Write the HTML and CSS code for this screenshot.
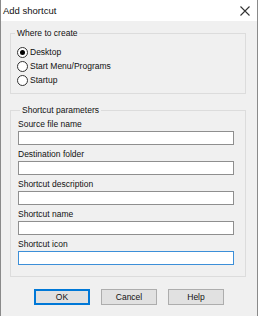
FILE: index.html
```html
<!DOCTYPE html>
<html lang="en">
<head>
    <meta charset="UTF-8">
    <title>Add shortcut</title>
    <link rel="stylesheet" href="styles.css">
</head>
<body>
    <div class="window">
        <div class="titlebar">
            <span class="title">Add shortcut</span>
            <svg class="close" width="10" height="10" viewBox="0 0 10 10">
                <path d="M0.5 0.5 L9.5 9.5 M9.5 0.5 L0.5 9.5" stroke="#333" stroke-width="1.1" fill="none"/>
            </svg>
        </div>

        <div class="content">
            <fieldset class="group group-where">
                <legend>Where to create</legend>
                <label class="radio"><span class="dot checked"></span>Desktop</label>
                <label class="radio"><span class="dot"></span>Start Menu/Programs</label>
                <label class="radio"><span class="dot"></span>Startup</label>
            </fieldset>

            <fieldset class="group group-params">
                <legend>Shortcut parameters</legend>
                <label class="field-label">Source file name</label>
                <input type="text" class="field">
                <label class="field-label">Destination folder</label>
                <input type="text" class="field">
                <label class="field-label">Shortcut description</label>
                <input type="text" class="field">
                <label class="field-label">Shortcut name</label>
                <input type="text" class="field">
                <label class="field-label">Shortcut icon</label>
                <input type="text" class="field field-focus">
            </fieldset>

            <div class="buttons">
                <button class="btn btn-default">OK</button>
                <button class="btn">Cancel</button>
                <button class="btn">Help</button>
            </div>
        </div>
    </div>
</body>
</html>
```

FILE: styles.css
```css
* {
    margin: 0;
    padding: 0;
    box-sizing: border-box;
}

body {
    background-color: #ffffff;
    font-family: "Liberation Sans", Arial, sans-serif;
    font-size: 8.5px;
    color: #111111;
}

.window {
    width: 258px;
    height: 316px;
    border-left: 1px solid #8a8a8a;
    border-right: 1px solid #8a8a8a;
    display: flex;
    flex-direction: column;
}

.titlebar {
    height: 21px;
    background-color: #ffffff;
    display: flex;
    align-items: center;
    justify-content: space-between;
    padding: 0 7px 0 2px;
}

.title {
    font-size: 9.5px;
}

.content {
    flex: 1;
    background-color: #f0f0f0;
    padding-top: 6px;
}

.group {
    border: 1px solid #dcdcdc;
    margin: 0 11px 0 9px;
    min-width: 0;
}

.group legend {
    margin-left: 4px;
    padding: 0 2px;
    line-height: 12px;
}

.group-where {
    padding: 6px 0 6px 0;
}

.radio {
    display: flex;
    align-items: center;
    height: 14px;
    padding-left: 6px;
    gap: 2px;
}

.dot {
    width: 11px;
    height: 11px;
    border: 1px solid #333333;
    border-radius: 50%;
    background-color: #ffffff;
    display: flex;
    align-items: center;
    justify-content: center;
}

.dot.checked::after {
    content: "";
    width: 5px;
    height: 5px;
    border-radius: 50%;
    background-color: #000000;
}

.group-params {
    margin-top: 10px;
    padding: 2px 0 11px 7px;
}

.group-params legend {
    margin-left: 2px;
}

.field-label {
    display: block;
    line-height: 13px;
}

.field {
    display: block;
    width: 216px;
    height: 14px;
    margin-bottom: 3px;
    border: 1px solid #8f8f8f;
    background-color: #ffffff;
    outline: none;
}

.field:last-child {
    margin-bottom: 0;
}

.field-focus {
    border-color: #3c8fd8;
}

.buttons {
    display: flex;
    gap: 11px;
    margin-top: 12px;
    padding-left: 33px;
}

.btn {
    width: 56px;
    height: 16px;
    background-color: #e1e1e1;
    border: 1px solid #adadad;
    font-family: inherit;
    font-size: 8.5px;
    color: #111111;
}

.btn-default {
    border-color: #0078d7;
    box-shadow: inset 0 0 0 1px #0078d7;
}
```
